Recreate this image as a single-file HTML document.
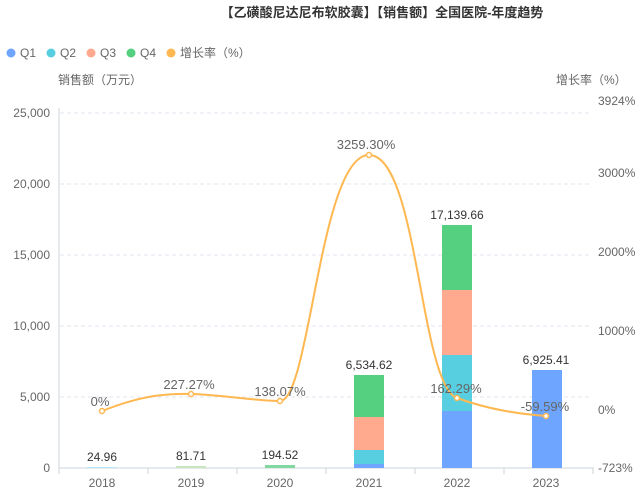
<!DOCTYPE html><html><head><meta charset="utf-8"><style>
body{margin:0;width:643px;height:494px;background:#fff;font-family:"Liberation Sans","Noto Sans CJK SC",sans-serif;overflow:hidden}
</style></head><body>
<svg width="643" height="494" xmlns="http://www.w3.org/2000/svg" font-family="Liberation Sans, Noto Sans CJK SC, sans-serif">
<text x="382" y="17" text-anchor="middle" font-size="13" font-weight="bold" fill="#333">【乙磺酸尼达尼布软胶囊】【销售额】全国医院-年度趋势</text>
<g font-size="12" fill="#666">
<circle cx="11" cy="53" r="4.5" fill="#6ea6ff"/><text x="20" y="57">Q1</text>
<circle cx="51" cy="53" r="4.5" fill="#58cfe0"/><text x="60" y="57">Q2</text>
<circle cx="91" cy="53" r="4.5" fill="#ffaa8f"/><text x="100" y="57">Q3</text>
<circle cx="131" cy="53" r="4.5" fill="#55cf80"/><text x="140" y="57">Q4</text>
<circle cx="171" cy="53" r="4.5" fill="#ffb851"/><text x="180" y="57">增长率（%）</text>
<text x="58" y="84">销售额（万元）</text>
<text x="556" y="84">增长率（%）</text>
</g>
<g stroke="#e0e6f1" stroke-dasharray="4,3">
<line x1="60" x2="592" y1="113" y2="113"/><line x1="60" x2="592" y1="184" y2="184"/><line x1="60" x2="592" y1="255" y2="255"/><line x1="60" x2="592" y1="326" y2="326"/><line x1="60" x2="592" y1="397" y2="397"/>
</g>
<g stroke="#ccd6d9"><line x1="59" y1="108" x2="59" y2="468"/><line x1="59" y1="468" x2="594" y2="468"/>
<line x1="59" y1="468" x2="59" y2="474"/><line x1="148" y1="468" x2="148" y2="474"/><line x1="237" y1="468" x2="237" y2="474"/><line x1="326" y1="468" x2="326" y2="474"/><line x1="415" y1="468" x2="415" y2="474"/><line x1="504" y1="468" x2="504" y2="474"/><line x1="593" y1="468" x2="593" y2="474"/></g>
<g font-size="12" fill="#666" text-anchor="end">
<text x="50" y="117">25,000</text><text x="50" y="188">20,000</text><text x="50" y="259">15,000</text><text x="50" y="330">10,000</text><text x="50" y="401">5,000</text><text x="50" y="472">0</text></g>
<g font-size="12" fill="#666"><text x="598" y="105">3924%</text><text x="598" y="177">3000%</text><text x="598" y="256">2000%</text><text x="598" y="335">1000%</text><text x="598" y="414">0%</text><text x="598" y="472">-723%</text></g>
<g font-size="12" fill="#666" text-anchor="middle"><text x="102" y="487">2018</text><text x="191" y="487">2019</text><text x="280" y="487">2020</text><text x="369" y="487">2021</text><text x="457" y="487">2022</text><text x="546" y="487">2023</text></g>
<rect x="87" y="467" width="30" height="1" fill="#b8e6ff"/>
<rect x="176" y="466" width="30" height="2" fill="#c8e6c0"/>
<rect x="265" y="465" width="30" height="3" fill="#80d8a0"/>
<rect x="354" y="464" width="30" height="4" fill="#6ea6ff"/><rect x="354" y="450" width="30" height="14" fill="#58cfe0"/><rect x="354" y="417" width="30" height="33" fill="#ffaa8f"/><rect x="354" y="375" width="30" height="42" fill="#55cf80"/>
<rect x="442" y="411" width="30" height="57" fill="#6ea6ff"/><rect x="442" y="355" width="30" height="56" fill="#58cfe0"/><rect x="442" y="290" width="30" height="65" fill="#ffaa8f"/><rect x="442" y="225" width="30" height="65" fill="#55cf80"/>
<rect x="532" y="370" width="30" height="98" fill="#6ea6ff"/>
<g font-size="12" fill="#333" text-anchor="middle"><text x="102" y="461">24.96</text><text x="191" y="460">81.71</text><text x="280" y="459">194.52</text><text x="369" y="369">6,534.62</text><text x="457" y="219">17,139.66</text><text x="546" y="364">6,925.41</text></g>
<path d="M102,411 C135,398 160,393 191,394 C225,395 255,401 280,401 C310,401 320,155 369,155 C418,155 420,385 457,398 C490,410 520,414 546,416" fill="none" stroke="#ffb851" stroke-width="2"/>
<g fill="#fff" stroke="#ffb851" stroke-width="1.5"><circle cx="102" cy="411" r="2.5"/><circle cx="191" cy="394" r="2.5"/><circle cx="280" cy="401" r="2.5"/><circle cx="369" cy="155" r="2.5"/><circle cx="457" cy="398" r="2.5"/><circle cx="546" cy="416" r="2.5"/></g>
<g font-size="13" fill="#666" text-anchor="middle"><text x="100" y="406">0%</text><text x="189" y="389">227.27%</text><text x="280" y="396">138.07%</text><text x="366" y="149">3259.30%</text><text x="456" y="393">162.29%</text><text x="545" y="411">-59.59%</text></g>
</svg></body></html>
